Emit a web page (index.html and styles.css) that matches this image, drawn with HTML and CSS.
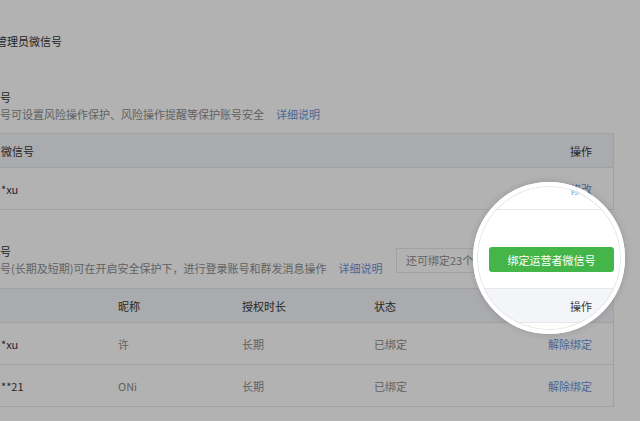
FILE: index.html
```html
<!DOCTYPE html>
<html lang="zh-CN">
<head>
<meta charset="utf-8">
<title>运营者微信号</title>
<link rel="stylesheet" href="styles.css">
</head>
<body>
<div class="page">
  <div class="step">管理员微信号</div>

  <section class="sec sec1">
    <h3 class="sec-title">号</h3>
    <p class="sec-desc">号可设置风险操作保护、风险操作提醒等保护账号安全<a class="link">详细说明</a></p>
  </section>

  <div class="table t1">
    <div class="thead">
      <span class="c-first">微信号</span>
      <span class="c-op">操作</span>
    </div>
    <div class="trow">
      <span class="c-first">*xu</span>
      <a class="link-plain c-op">修改</a>
    </div>
  </div>

  <section class="sec sec2">
    <div class="sec-info">
      <h3 class="sec-title">号</h3>
      <p class="sec-desc">号(长期及短期)可在开启安全保护下，进行登录账号和群发消息操作<a class="link">详细说明</a></p>
    </div>
    <div class="actions">
      <span class="quota">还可绑定23个</span>
      <button class="btn-green">绑定运营者微信号</button>
    </div>
  </section>

  <div class="table t2">
    <div class="thead">
      <span class="c-first"></span>
      <span>昵称</span>
      <span>授权时长</span>
      <span>状态</span>
      <span class="c-op">操作</span>
    </div>
    <div class="trow">
      <span class="c-first">*xu</span>
      <span class="muted">许</span>
      <span class="muted">长期</span>
      <span class="muted">已绑定</span>
      <a class="link-plain c-op">解除绑定</a>
    </div>
    <div class="trow">
      <span class="c-first">**21</span>
      <span class="muted">ONi</span>
      <span class="muted">长期</span>
      <span class="muted">已绑定</span>
      <a class="link-plain c-op">解除绑定</a>
    </div>
  </div>
</div>

<div class="spotlight"></div>
</body>
</html>
```

FILE: styles.css
```css
html, body {
  margin: 0;
  padding: 0;
}

body {
  width: 640px;
  height: 421px;
  overflow: hidden;
  position: relative;
  background: #ffffff;
  font-family: "Noto Sans CJK SC", "Noto Sans", "Liberation Sans", sans-serif;
  font-size: 11px;
  color: #353535;
}

.page {
  margin-left: -10px;
  width: 624px;
  padding-top: 33px;
}

.step {
  padding-left: 6px;
  line-height: 16px;
}

.sec {
  padding-left: 10px;
}

.sec1 {
  margin-top: 40px;
}

.sec-title {
  margin: 0;
  font-size: 11px;
  font-weight: normal;
  line-height: 16px;
}

.sec-desc {
  margin: 1px 0 0;
  line-height: 16px;
  color: #8d8d8d;
}

.link {
  margin-left: 12px;
  color: #6b94d6;
  text-decoration: none;
}

.link-plain {
  color: #6b94d6;
  text-decoration: none;
}

.table {
  margin-top: 11px;
  border: 1px solid #e7e7eb;
}

.thead,
.trow {
  display: grid;
  align-items: center;
}

.t1 .thead,
.t1 .trow {
  grid-template-columns: 1fr auto;
}

.t2 .thead,
.t2 .trow {
  grid-template-columns: 127px 124px 132px 1fr auto;
}

.thead {
  background: #f4f5f9;
  border-bottom: 1px solid #e7e7eb;
}

.t1 .thead {
  height: 33px;
}

.t2 .thead {
  height: 33px;
}

.trow {
  height: 41px;
  border-bottom: 1px solid #e7e7eb;
}

.trow:last-child {
  border-bottom: none;
}

.c-first {
  padding-left: 10px;
}

.c-op {
  padding-right: 21px;
  text-align: right;
}

.muted {
  color: #8d8d8d;
}

.sec2 {
  margin-top: 33px;
  display: flex;
  align-items: center;
  justify-content: space-between;
}

.sec2 + .table {
  margin-top: 12px;
}

.actions {
  display: flex;
  align-items: center;
}

.quota {
  box-sizing: border-box;
  width: 80px;
  height: 25px;
  margin-top: 2px;
  padding: 0 2px 0 9px;
  border: 1px solid #e7e7eb;
  line-height: 23px;
  color: #8d8d8d;
  white-space: nowrap;
  overflow: hidden;
}

.btn-green {
  margin-left: 13px;
  width: 125px;
  height: 25px;
  padding: 0;
  border: none;
  border-radius: 3px;
  background: #44b549;
  color: #ffffff;
  font-family: inherit;
  font-size: 11px;
}

.spotlight {
  position: absolute;
  left: 473px;
  top: 182px;
  width: 152px;
  height: 152px;
  box-sizing: border-box;
  border-radius: 50%;
  border: 4px solid #ffffff;
  box-shadow:
    inset 0 0 0 1px #e6e6e6,
    0 0 6px 1px rgba(0, 0, 0, 0.12),
    0 0 0 1400px rgba(0, 0, 0, 0.3);
  pointer-events: none;
}
```
